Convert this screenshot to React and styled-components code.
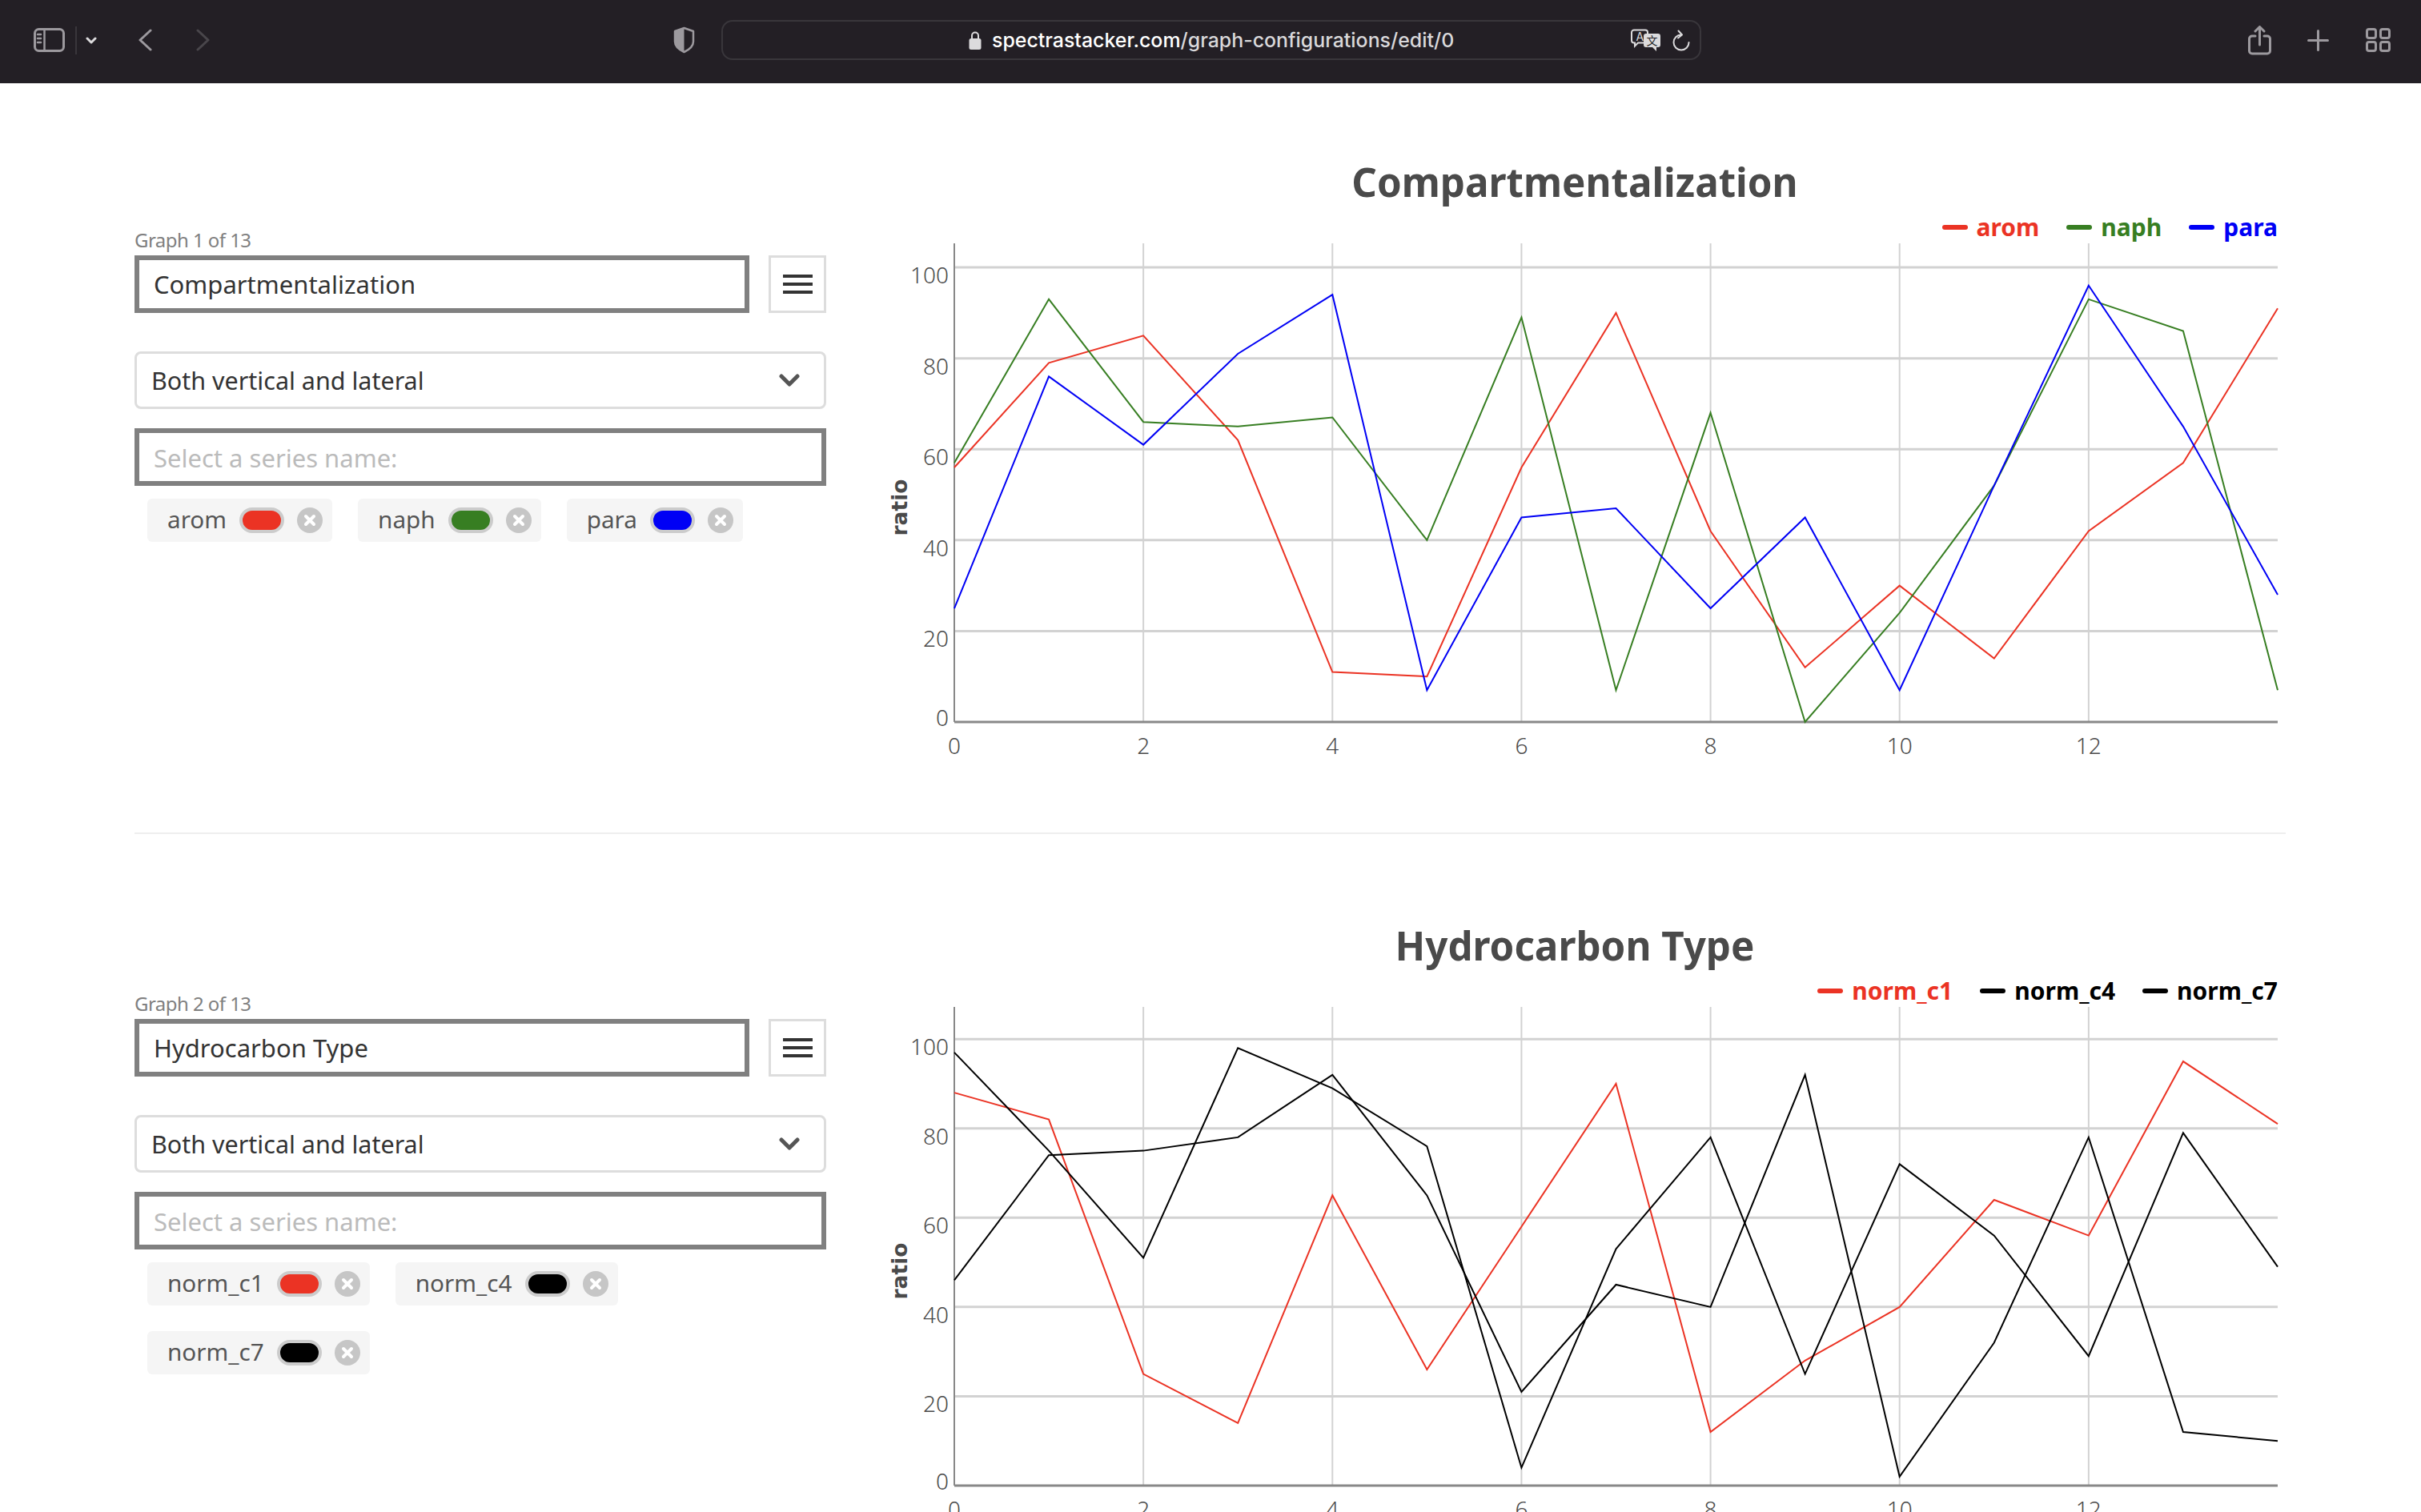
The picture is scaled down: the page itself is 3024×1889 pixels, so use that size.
import React from "react";
import styled, { createGlobalStyle } from "styled-components";

const RED = "#eb3324";
const GREEN = "#377e22";
const BLUE = "#0000f5";
const BLACK = "#000000";

const PLOT_LEFT = 113;
const PLOT_RIGHT = 1766;
const PLOT_TOP = 1;
const PLOT_BOTTOM = 599;

const graphs = [
  {
    title: "Compartmentalization",
    yMax: 105.3,
    series: [
      { name: "arom", color: RED, data: [56, 79, 85, 62, 11, 10, 56, 90, 42, 12, 30, 14, 42, 57, 91] },
      { name: "naph", color: GREEN, data: [57, 93, 66, 65, 67, 40, 89, 7, 68, 0, 24, 52, 93, 86, 7] },
      { name: "para", color: BLUE, data: [25, 76, 61, 81, 94, 7, 45, 47, 25, 45, 7, 52, 96, 65, 28] },
    ],
  },
  {
    title: "Hydrocarbon Type",
    yMax: 107.2,
    series: [
      { name: "norm_c1", color: RED, data: [88, 82, 25, 14, 65, 26, 58, 90, 12, 28, 40, 64, 56, 95, 81] },
      { name: "norm_c4", color: BLACK, data: [46, 74, 75, 78, 92, 65, 21, 45, 40, 92, 2, 32, 78, 12, 10] },
      { name: "norm_c7", color: BLACK, data: [97, 75, 51, 98, 89, 76, 4, 53, 78, 25, 72, 56, 29, 79, 49] },
    ],
  },
];

const GlobalStyle = createGlobalStyle`
  html, body {
    margin: 0;
    height: 1889px;
    overflow: hidden;
    background: #fff;
    font-family: "Noto Sans", sans-serif;
  }
  * { box-sizing: border-box; }
`;

const Toolbar = styled.div`
  display: flex;
  align-items: center;
  height: 104px;
  padding: 0 0 4px 42px;
  background: #231f25;
`;
const ToolIcon = styled.svg`
  flex: none;
  display: block;
  margin-left: ${(p) => p.$gap || 0}px;
  fill: none;
  stroke: ${(p) => p.$color || "#9c999e"};
  stroke-width: ${(p) => p.$stroke || 3};
  stroke-linecap: round;
  stroke-linejoin: round;
`;
const ToolDivider = styled.div`
  width: 2px;
  height: 35px;
  margin-left: 13px;
  background: #39363b;
`;
const UrlBar = styled.div`
  display: flex;
  align-items: center;
  flex: none;
  width: 1224px;
  height: 50px;
  margin-left: 33px;
  padding: 0 12px 0 307px;
  border: 2px solid #39363b;
  border-radius: 14px;
`;
const UrlText = styled.span`
  margin-left: 13px;
  font-family: "Inter", sans-serif;
  font-size: 24.9px;
  font-weight: 500;
  color: #d9d8da;
  white-space: nowrap;
`;
const UrlHost = styled.span`
  color: #fff;
`;
const TranslateIcon = styled.svg`
  flex: none;
  margin-left: auto;
`;

const Content = styled.main`
  padding: 0 169px 0 168px;
`;
const Section = styled.section`
  display: grid;
  grid-template-columns: 864px 1fr;
  height: 936px;
`;
const Controls = styled.div`
  padding-top: 180px;
`;
const GraphCount = styled.div`
  height: 33px;
  margin-bottom: 2px;
  font-size: 24px;
  letter-spacing: -0.55px;
  line-height: 31px;
  color: #808080;
`;
const NameRow = styled.div`
  display: flex;
  gap: 24px;
`;
const BoxInput = styled.input`
  display: block;
  width: ${(p) => p.$width || "100%"};
  height: 72px;
  padding: 0 18px;
  border: 6px solid #808080;
  border-radius: 0;
  outline: none;
  background: #fff;
  font-family: inherit;
  font-size: 31px;
  color: #333;
`;
const SeriesInput = styled(BoxInput)`
  padding-top: 2px;
  &::placeholder {
    color: #bbb;
  }
`;
const MenuButton = styled.button`
  display: flex;
  flex-direction: column;
  justify-content: center;
  align-items: center;
  gap: 5.5px;
  width: 72px;
  height: 72px;
  padding: 0;
  border: 3px solid #ddd;
  background: #fff;
`;
const MenuBar = styled.span`
  width: 37px;
  height: 4.5px;
  background: #333;
`;
const SelectBox = styled.div`
  display: flex;
  align-items: center;
  justify-content: space-between;
  height: 72px;
  margin: 48px 0 24px;
  padding: 0 30px 0 18px;
  border: 3px solid #ddd;
  border-radius: 8px;
  font-size: 30.5px;
  color: #333;
`;
const Chips = styled.div`
  display: flex;
  flex-wrap: wrap;
  gap: 32px;
  margin-top: 16px;
  padding-left: 16px;
`;
const Chip = styled.div`
  display: flex;
  align-items: center;
  height: 54px;
  padding: 0 12px 0 25px;
  border-radius: 6px;
  background: #f5f5f5;
  font-size: 29.7px;
  line-height: 50px;
  color: #555;
`;
const ChipName = styled.span`
  margin-top: -2px;
`;
const Swatch = styled.span`
  width: 56px;
  height: 32px;
  margin: 0 16px;
  border: 4px solid #ccc;
  border-radius: 16px;
  background: ${(p) => p.$color};
`;
const ChipClose = styled.svg`
  display: block;
  flex: none;
`;

const ChartColumn = styled.div`
  margin-left: 47px;
  padding-top: 92px;
`;
const ChartTitle = styled.h2`
  margin: 0;
  font-size: 49.3px;
  font-weight: 700;
  line-height: 62px;
  text-align: center;
  color: #4a4a4a;
`;
const Legend = styled.div`
  display: flex;
  justify-content: flex-end;
  gap: 34px;
  height: 34px;
  margin: 9px 10px 2px 0;
  font-size: 30px;
  font-weight: 700;
  line-height: 34px;
`;
const LegendItem = styled.div`
  display: flex;
  align-items: center;
  gap: 11px;
  color: ${(p) => p.$color};
`;
const LegendDash = styled.span`
  width: 32px;
  height: 6px;
  border-radius: 3px;
  background: ${(p) => p.$color};
`;
const ChartSvg = styled.svg`
  display: block;
  overflow: visible;
`;
const TickLabel = styled.text`
  font-size: 28px;
  font-weight: 300;
  fill: #4a4a4a;
`;
const AxisTitle = styled.text`
  font-family: "DejaVu Sans", sans-serif;
  font-size: 26.5px;
  font-weight: 700;
  fill: #4a4a4a;
`;
const Divider = styled.hr`
  height: 2px;
  margin: 0 0 16px;
  border: 0;
  background: #eee;
`;

function Chart({ series, yMax }) {
  const xAt = (x) => PLOT_LEFT + (x * (PLOT_RIGHT - PLOT_LEFT)) / 14;
  const yAt = (y) => PLOT_BOTTOM - (y * (PLOT_BOTTOM - PLOT_TOP)) / yMax;
  return (
    <ChartSvg width="1776" height="660" viewBox="0 0 1776 660">
      {[0, 2, 4, 6, 8, 10, 12].map((x) => (
        <g key={x}>
          <line x1={xAt(x)} x2={xAt(x)} y1={PLOT_TOP} y2={PLOT_BOTTOM} stroke="#d2d2d2" strokeWidth="2" />
          <TickLabel x={xAt(x)} y={639} textAnchor="middle">{x}</TickLabel>
        </g>
      ))}
      {[20, 40, 60, 80, 100].map((y) => (
        <line key={y} x1={PLOT_LEFT} x2={PLOT_RIGHT} y1={yAt(y)} y2={yAt(y)} stroke="#d2d2d2" strokeWidth="3" />
      ))}
      {[0, 20, 40, 60, 80, 100].map((y) => (
        <TickLabel key={y} x={PLOT_LEFT - 7} y={y === 0 ? yAt(y) + 5 : yAt(y) + 20} textAnchor="end">{y}</TickLabel>
      ))}
      <line x1={PLOT_LEFT} x2={PLOT_LEFT} y1={PLOT_TOP} y2={PLOT_BOTTOM} stroke="#888" strokeWidth="2" />
      <line x1={PLOT_LEFT} x2={PLOT_RIGHT} y1={PLOT_BOTTOM} y2={PLOT_BOTTOM} stroke="#888" strokeWidth="3" />
      {series.map((s) => (
        <polyline
          key={s.name}
          points={s.data.map((v, i) => `${xAt(i)},${yAt(v)}`).join(" ")}
          fill="none"
          stroke={s.color}
          strokeWidth="2"
        />
      ))}
      <AxisTitle transform="translate(54 331) rotate(-90)" textAnchor="middle">ratio</AxisTitle>
    </ChartSvg>
  );
}

function GraphRow({ graph, index }) {
  return (
    <Section>
      <Controls>
        <GraphCount>Graph {index + 1} of 13</GraphCount>
        <NameRow>
          <BoxInput $width="768px" defaultValue={graph.title} />
          <MenuButton>
            <MenuBar />
            <MenuBar />
            <MenuBar />
          </MenuButton>
        </NameRow>
        <SelectBox>
          Both vertical and lateral
          <svg width="26" height="16" viewBox="0 0 26 16" fill="none" stroke="#555" strokeWidth="5" strokeLinecap="round" strokeLinejoin="round">
            <path d="M3 3l10 10L23 3" />
          </svg>
        </SelectBox>
        <SeriesInput placeholder="Select a series name:" />
        <Chips>
          {graph.series.map((s) => (
            <Chip key={s.name}>
              <ChipName>{s.name}</ChipName>
              <Swatch $color={s.color} />
              <ChipClose width="32" height="32" viewBox="0 0 32 32">
                <circle cx="16" cy="16" r="16" fill="#c6c6c6" />
                <path d="M11 11l10 10M21 11L11 21" stroke="#fff" strokeWidth="4" strokeLinecap="round" />
              </ChipClose>
            </Chip>
          ))}
        </Chips>
      </Controls>
      <ChartColumn>
        <ChartTitle>{graph.title}</ChartTitle>
        <Legend>
          {graph.series.map((s) => (
            <LegendItem key={s.name} $color={s.color}>
              <LegendDash $color={s.color} />
              {s.name}
            </LegendItem>
          ))}
        </Legend>
        <Chart series={graph.series} yMax={graph.yMax} />
      </ChartColumn>
    </Section>
  );
}

export default function App() {
  return (
    <>
      <GlobalStyle />
      <Toolbar>
        <ToolIcon width="39" height="30" viewBox="0 0 39 30">
          <rect x="1.5" y="1.5" width="36" height="27" rx="5" />
          <path d="M13.5 2v26M5 8h4M5 13h4M5 18h4" strokeWidth="2.5" />
        </ToolIcon>
        <ToolDivider />
        <ToolIcon width="14" height="9" viewBox="0 0 14 9" $gap={11} $color="#dcdbdd">
          <path d="M2 2l5 5 5-5" />
        </ToolIcon>
        <ToolIcon width="17" height="28" viewBox="0 0 17 28" $gap={52}>
          <path d="M15 2L2 14l13 12" />
        </ToolIcon>
        <ToolIcon width="17" height="28" viewBox="0 0 17 28" $gap={55} $color="#49464b">
          <path d="M2 2l13 12L2 26" />
        </ToolIcon>
        <ToolIcon width="27" height="34" viewBox="0 0 27 34" $gap={579} $stroke={2.5}>
          <path d="M13.5 2L25 6v13c0 6-5 10-11.5 13C7 29 2 25 2 19V6z" />
          <path d="M13.5 2L2 6v13c0 6 5 10 11.5 13z" fill="#9c999e" stroke="none" />
        </ToolIcon>
        <UrlBar>
          <svg width="16" height="24" viewBox="0 0 16 24">
            <path d="M4 11V6.5a4 4 0 0 1 8 0V11" fill="none" stroke="#dcdbdd" strokeWidth="2" />
            <rect x="0.5" y="10" width="15" height="14" rx="2.5" fill="#dcdbdd" />
          </svg>
          <UrlText>
            <UrlHost>spectrastacker.com</UrlHost>/graph-configurations/edit/0
          </UrlText>
          <TranslateIcon width="37" height="28" viewBox="0 0 37 28">
            <path d="M4 1.5h14a3 3 0 0 1 3 3v13H9l-4 4v-4H4a3 3 0 0 1-3-3v-10a3 3 0 0 1 3-3z" fill="none" stroke="#dcdbdd" strokeWidth="2" />
            <text x="6.5" y="15" fontFamily="Inter, sans-serif" fontSize="14" fill="#dcdbdd">A</text>
            <path d="M19 6h15a3 3 0 0 1 3 3v11a3 3 0 0 1-3 3h-2v5l-5-5h-8a3 3 0 0 1-3-3V9a3 3 0 0 1 3-3z" fill="#dcdbdd" />
            <text x="19.5" y="20" fontFamily="'Noto Sans CJK SC', sans-serif" fontSize="14" fill="#231f25">文</text>
          </TranslateIcon>
          <ToolIcon width="22" height="27" viewBox="0 0 22 27" $gap={15} $color="#dcdbdd" $stroke={2}>
            <path d="M11 6.5a9.5 9.5 0 1 0 9.5 9.5M7.5 1.5L12 6.5l-5 4" />
          </ToolIcon>
        </UrlBar>
        <ToolIcon width="29" height="37" viewBox="0 0 29 37" $gap={683}>
          <path d="M9 13H5a3.5 3.5 0 0 0-3.5 3.5v15A3.5 3.5 0 0 0 5 35h19a3.5 3.5 0 0 0 3.5-3.5v-15A3.5 3.5 0 0 0 24 13h-4M14.5 24V2M9 7l5.5-5.5L20 7" />
        </ToolIcon>
        <ToolIcon width="27" height="27" viewBox="0 0 27 27" $gap={45}>
          <path d="M13.5 1.5v24M1.5 13.5h24" />
        </ToolIcon>
        <ToolIcon width="31" height="30" viewBox="0 0 31 30" $gap={46}>
          <rect x="1.5" y="1.5" width="11" height="11" rx="2.5" />
          <rect x="18.5" y="1.5" width="11" height="11" rx="2.5" />
          <rect x="1.5" y="17.5" width="11" height="11" rx="2.5" />
          <rect x="18.5" y="17.5" width="11" height="11" rx="2.5" />
        </ToolIcon>
      </Toolbar>
      <Content>
        <GraphRow graph={graphs[0]} index={0} />
        <Divider />
        <GraphRow graph={graphs[1]} index={1} />
      </Content>
    </>
  );
}
